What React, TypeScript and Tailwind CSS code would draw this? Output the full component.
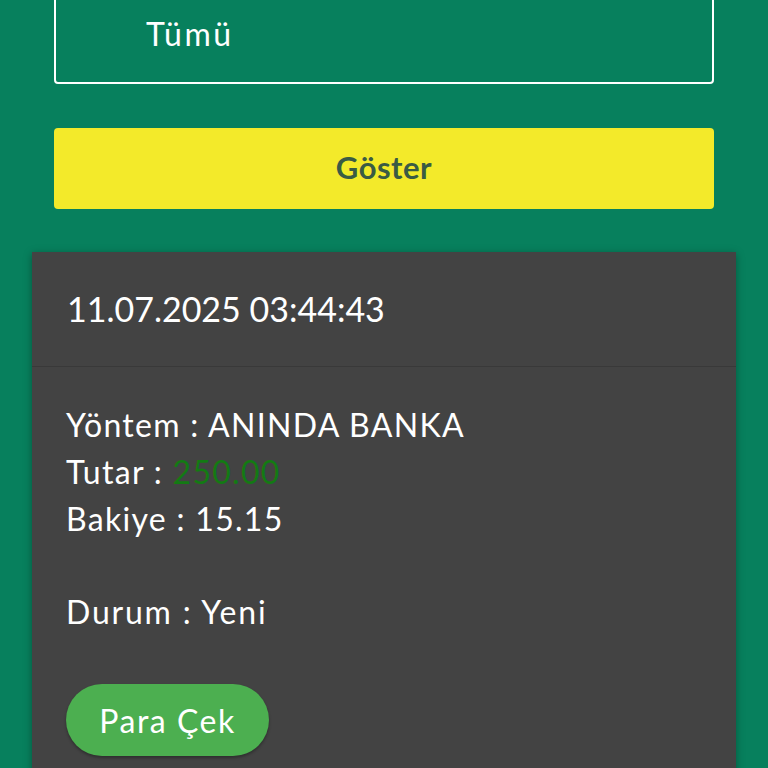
export default function App() {
  return (
    <div className="min-h-screen w-full overflow-hidden bg-[#07805d] font-['Lato',sans-serif] text-white">
      <div className="flex flex-col">
        {/* filter select */}
        <div className="mx-[54px] -mt-[40px] flex h-[124px] items-end rounded-[4px] border-2 border-white pb-[32px] pl-[90px]">
          <span className="text-[32px] leading-none tracking-[2.5px]">Tümü</span>
        </div>

        <button className="mx-[54px] mt-[44px] flex h-[81px] items-center justify-center rounded-[4px] bg-[#f3ea2a] pb-[3px] text-[31px] font-bold tracking-[0.5px] text-[#3a5b44]">
          Göster
        </button>

        {/* transaction card */}
        <section className="mx-[32px] mt-[43px] bg-[#434343] shadow-[0_2px_8px_rgba(0,0,0,0.35)]">
          <div className="flex h-[115px] items-center border-b border-[#393939] px-[35px]">
            <span className="text-[34px] leading-none">11.07.2025 03:44:43</span>
          </div>
          <div className="flex flex-col px-[34px] pt-[34px] text-[32px] leading-[47px] tracking-[1.3px]">
            <p>Yöntem : ANINDA BANKA</p>
            <p>
              Tutar : <span className="text-[#137a13]">250.00</span>
            </p>
            <p>Bakiye : 15.15</p>
            <p className="mt-[46px] tracking-[1.8px]">Durum : Yeni</p>
            <div className="pb-[40px] pt-[49px]">
              <button className="h-[72px] w-[203px] rounded-full bg-[#4caf50] text-[32px] tracking-[1.5px] text-white shadow-[0_2px_3px_rgba(0,0,0,0.3)]">
                Para Çek
              </button>
            </div>
          </div>
        </section>
      </div>
    </div>
  );
}
